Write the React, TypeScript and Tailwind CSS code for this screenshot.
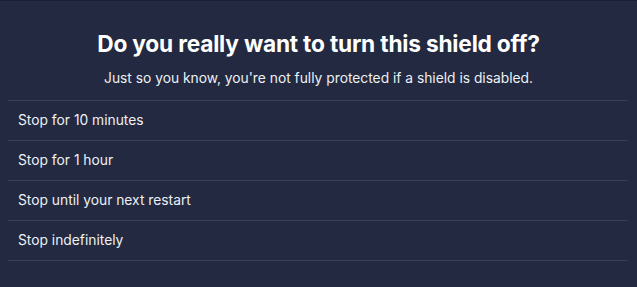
const options = [
  'Stop for 10 minutes',
  'Stop for 1 hour',
  'Stop until your next restart',
  'Stop indefinitely',
];

export default function App() {
  return (
    <div
      className="w-[637px] h-[287px] bg-[#222940] border-t border-[#1b2134] text-white px-2"
      style={{ fontFamily: 'Inter, "Noto Sans", sans-serif' }}
    >
      <div className="flex flex-col items-center">
        <h1 className="mt-[29px] text-[22.7px] leading-[28px] font-bold tracking-[-0.2px]">
          Do you really want to turn this shield off?
        </h1>
        <p className="mt-[11px] text-[13.8px] leading-[18px] text-[#eef0f4]">
          Just so you know, you're not fully protected if a shield is disabled.
        </p>
      </div>
      <ul className="mt-[13px] w-[620px]">
        {options.map((label) => (
          <li
            key={label}
            className="h-10 flex items-center pl-[10px] border-t border-[#394058] text-[13.8px] text-[#eef0f4] last:border-b last:h-[41px]"
          >
            {label}
          </li>
        ))}
      </ul>
    </div>
  );
}
